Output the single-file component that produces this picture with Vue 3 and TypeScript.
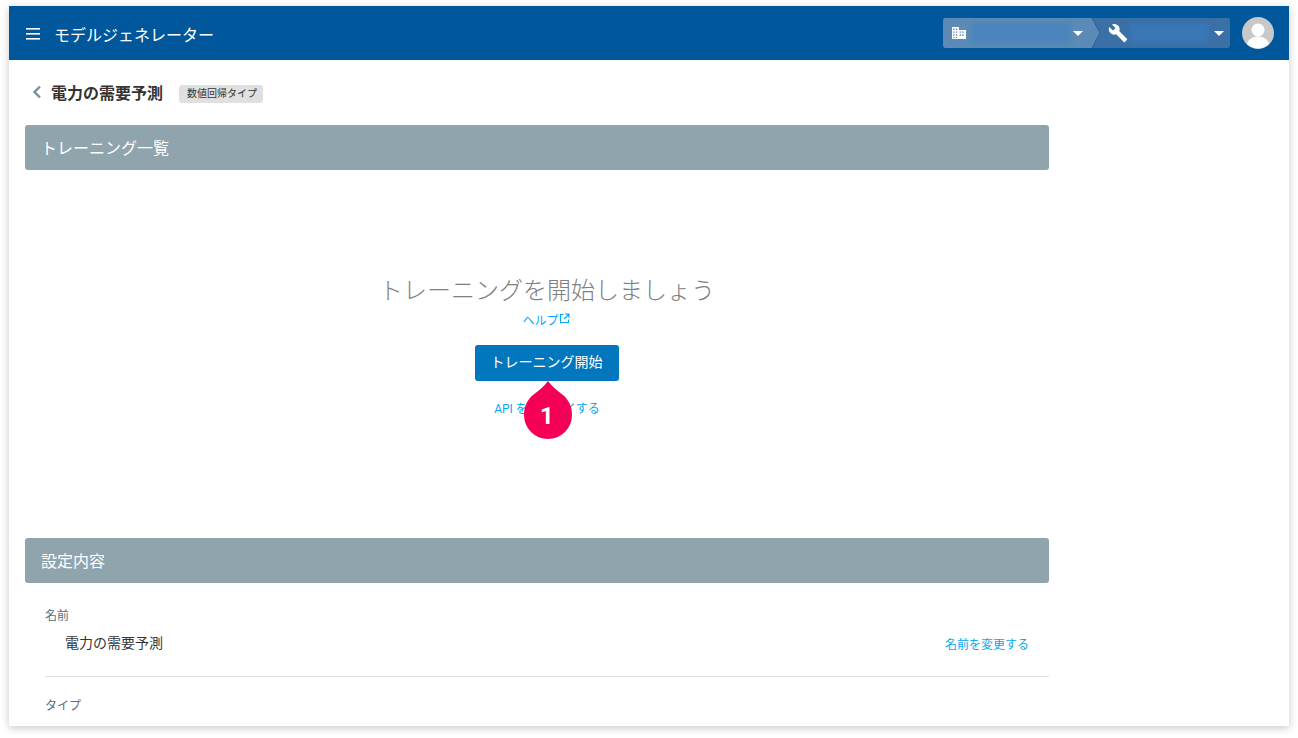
<script setup lang="ts">
// Model generator detail page: empty training list plus the settings summary.
const menuLines = [7, 12, 17]
</script>

<template>
  <div class="window">
    <header class="topbar">
      <button type="button" class="menu-btn" aria-label="メニュー">
        <svg width="16" height="24" viewBox="0 0 16 24">
          <rect v-for="y in menuLines" :key="y" x="1" :y="y" width="14" height="1.6" fill="#fff" />
        </svg>
      </button>
      <span class="app-name">モデルジェネレーター</span>
      <div class="crumbs">
        <div class="crumb crumb--org">
          <svg class="crumb-icon" width="16" height="14" viewBox="0 0 16 14">
            <path fill="#fff" d="M1 1h7v3h7v9H1zM2.2 2.5v1.4h1.3V2.5zm2.6 0v1.4h1.3V2.5zM2.2 5.4v1.4h1.3V5.4zm2.6 0v1.4h1.3V5.4zm3.8 0v1.4h1.5V5.4zm2.6 0v1.4h1.5V5.4zM2.2 8.3v1.4h1.3V8.3zm2.6 0v1.4h1.3V8.3zm3.8 0v1.4h1.5V8.3zm2.6 0v1.4h1.5V8.3zM2.2 11v1h1.3v-1zm2.6 0v1h1.3v-1z" />
          </svg>
          <span class="blurred blurred--org"></span>
          <span class="caret"></span>
        </div>
        <div class="crumb crumb--tool">
          <svg class="crumb-icon" width="20" height="20" viewBox="0 0 24 24">
            <path fill="#fff" d="M22.7 19l-9.1-9.1c.9-2.3.4-5-1.5-6.9-2-2-5-2.4-7.4-1.3L9 6 6 9 1.600 4.700C.4 7.100.9 10.100 2.900 12.100c1.900 1.900 4.600 2.400 6.900 1.500l9.100 9.100c.4.400 1 .4 1.400 0l2.300-2.300c.5-.4.5-1.100.1-1.400z" />
          </svg>
          <span class="blurred blurred--tool"></span>
          <span class="caret"></span>
        </div>
        <svg class="crumb-edge" width="10" height="30" viewBox="0 0 10 30">
          <path d="M1 0 9 15 1 30" fill="none" stroke="#2c6298" stroke-width="1" />
        </svg>
      </div>
      <div class="avatar">
        <svg width="32" height="32" viewBox="0 0 32 32">
          <circle cx="16" cy="16" r="16" fill="#c8c8c8" />
          <circle cx="16" cy="13" r="6.500" fill="#fff" />
          <path fill="#fff" d="M5 27c1-5 6-7.500 11-7.500S26 22 27 27a16 16 0 0 1-22 0z" />
        </svg>
      </div>
    </header>

    <main class="content">
      <div class="page-title">
        <svg class="back" width="10" height="14" viewBox="0 0 10 14">
          <path d="M8 1.500 2.500 7 8 12.500" fill="none" stroke="#78909c" stroke-width="2.400" />
        </svg>
        <h1>電力の需要予測</h1>
        <span class="type-chip">数値回帰タイプ</span>
      </div>

      <section>
        <h2 class="section-bar">トレーニング一覧</h2>
        <div class="empty">
          <p class="empty-title">トレーニングを開始しましょう</p>
          <a class="link help-link">ヘルプ<svg width="11" height="11" viewBox="0 0 11 11">
              <path fill="none" stroke="#03a9f4" stroke-width="1.100" d="M4.500 1.500H1.500v8h8V6.500M6 1h4v4M10 1 5 6" />
            </svg></a>
          <div class="start-wrap">
            <button type="button" class="start-btn">トレーニング開始</button>
            <svg class="pin" width="48" height="58" viewBox="0 0 48 58">
              <path fill="#f50057" d="M24 0c3 4.500 8 8.500 13 12.500C43.500 17 48 24 48 34a24 24 0 0 1-48 0c0-10 4.500-17 11-21.500C16 8.500 21 4.500 24 0z" />
              <text x="23" y="43" text-anchor="middle" class="pin-num">1</text>
            </svg>
          </div>
          <a class="link api-link">API をデプロイする</a>
        </div>
      </section>

      <section>
        <h2 class="section-bar">設定内容</h2>
        <div class="settings">
          <div class="setting">
            <div class="setting-label">名前</div>
            <div class="setting-row">
              <span class="setting-value">電力の需要予測</span>
              <a class="link">名前を変更する</a>
            </div>
          </div>
          <div class="setting">
            <div class="setting-label">タイプ</div>
          </div>
        </div>
      </section>
    </main>
  </div>
</template>

<style>
html, body { background: #fff; height: 100%; overflow: hidden; }
</style>

<style scoped>
.window {
  width: 1280px;
  height: 720px;
  margin: 6px 0 0 9px;
  overflow: hidden;
  background: #fff;
  box-shadow: 0 2px 8px rgba(0, 0, 0, .22);
  font-family: Roboto, "Noto Sans CJK JP", sans-serif;
  color: #333;
}

.topbar {
  display: flex;
  align-items: center;
  height: 54px;
  padding: 0 15px 0 16px;
  background: #01579b;
  color: #fff;
}
.menu-btn { display: flex; width: 16px; padding: 0; margin-right: 13px; background: none; border: 0; }
.app-name { padding-top: 1px; font-size: 16px; }
.crumbs { display: flex; flex: none; position: relative; height: 30px; margin-left: auto; margin-right: 12px; border-radius: 3px; overflow: hidden; background: #3b70a6; }
.crumb { display: flex; flex: none; align-items: center; position: relative; box-sizing: border-box; }
.crumb--org {
  width: 157px;
  padding-left: 8px;
  background: #5a8ab5;
  clip-path: polygon(0 0, 149px 0, 157px 15px, 149px 30px, 0 30px);
  z-index: 1;
}
.crumb--tool { width: 138px; margin-left: -8px; padding-left: 16px; background: #3b70a6; }
.crumb-edge { position: absolute; left: 148px; top: 0; z-index: 2; }
.crumb-icon { flex: none; }
.blurred { display: block; height: 20px; filter: blur(2px); opacity: .9; }
.blurred--org { width: 98px; margin-left: 5px; background: #4a84be; }
.blurred--tool { width: 79px; margin-left: 2px; background: #3a78b8; }
.caret { width: 0; height: 0; margin-left: auto; border: 5px solid transparent; border-top-color: #fff; border-bottom: 0; }
.crumb--org .caret { margin-right: 17px; }
.crumb--tool .caret { margin-right: 6px; }
.avatar { width: 32px; height: 32px; }

.content { padding: 0 240px 0 16px; }
.page-title { display: flex; align-items: center; height: 65px; }
.back { margin: 0 9px 2px 7px; }
h1 { margin: 0 0 2px; font-size: 16px; font-weight: 700; color: #333; }
.type-chip {
  margin: 2px 0 0 16px;
  padding: 0 6px 0 8px;
  height: 18px;
  line-height: 18px;
  font-size: 10px;
  background: #e0e0e0;
  border-radius: 3px;
}
.section-bar {
  margin: 0;
  height: 45px;
  padding-left: 16px;
  line-height: 47px;
  font-size: 16px;
  font-weight: 400;
  color: #fff;
  background: #90a4ae;
  border-radius: 3px;
}

.empty {
  display: flex;
  flex-direction: column;
  align-items: center;
  height: 368px;
  padding: 104px 0 0 20px;
  box-sizing: border-box;
}
.empty-title { margin: 0; font-size: 24px; line-height: 34px; font-weight: 200; color: #808080; }
.link { font-size: 12px; color: #03a9f4; white-space: nowrap; }
.help-link { display: flex; align-items: flex-start; margin: 4px 2px 0 0; line-height: 18px; }
.help-link svg { margin-top: 1px; }
.start-wrap { position: relative; margin-top: 15px; }
.start-btn {
  display: block;
  width: 144px;
  height: 36px;
  padding: 0 1px 4px 0;
  font: inherit;
  font-size: 14px;
  color: #fff;
  background: #0277bd;
  border: 0;
  border-radius: 3px;
}
.pin { position: absolute; top: 100%; left: 49px; z-index: 2; }
.pin-num { font-size: 24px; font-weight: 700; fill: #fff; font-family: Roboto, sans-serif; }
.api-link { margin-top: 19px; line-height: 18px; }

.settings { padding: 0 0 0 20px; }
.setting { padding-top: 24px; }
.setting:first-child { border-bottom: 1px solid #e0e0e0; height: 94px; box-sizing: border-box; }
.setting + .setting { padding-top: 20px; }
.setting-label { font-size: 12px; line-height: 18px; color: #546e7a; }
.setting-row { display: flex; align-items: center; justify-content: space-between; margin-top: 8px; padding: 0 20px; }
.setting-value { font-size: 14px; line-height: 20px; color: #333; }
</style>
